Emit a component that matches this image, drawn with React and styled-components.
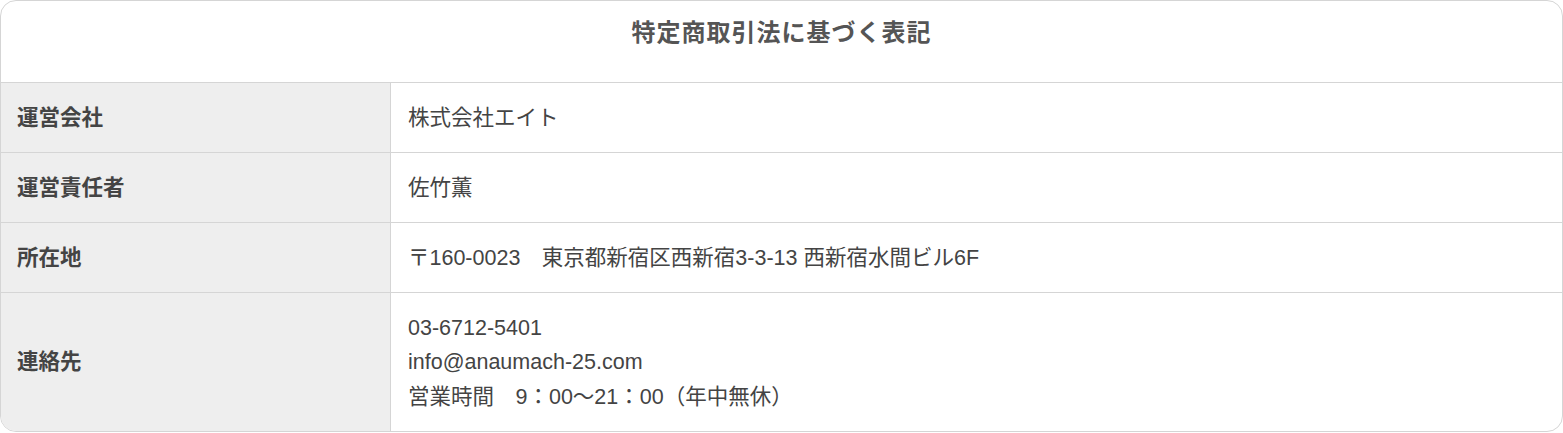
import styled, { createGlobalStyle } from 'styled-components'

const GlobalStyle = createGlobalStyle`
    html, body {
        margin: 0;
        padding: 0;
        background: #fff;
    }

    body {
        font-family: "Liberation Sans", "Noto Sans CJK JP", sans-serif;
        color: #444;
    }
`

const rows = [
    { label: '運営会社', values: ['株式会社エイト'] },
    { label: '運営責任者', values: ['佐竹薫'] },
    { label: '所在地', values: ['〒160-0023\u3000東京都新宿区西新宿3-3-13 西新宿水間ビル6F'] },
    {
        label: '連絡先',
        values: [
            '03-6712-5401',
            'info@anaumach-25.com',
            '営業時間\u30009：00〜21：00（年中無休）',
        ],
    },
]

function App () {
    return (
        <>
            <GlobalStyle />
            <Card>
                <Title>特定商取引法に基づく表記</Title>
                {rows.map((row) => (
                    <Row key={row.label}>
                        <Label>{row.label}</Label>
                        <Value>
                            {row.values.map((v) => (
                                <Line key={v}>{v}</Line>
                            ))}
                        </Value>
                    </Row>
                ))}
            </Card>
        </>
    )
}

const Card = styled.div`
    width: 100%;
    box-sizing: border-box;
    border: 1px solid #d5d5d5;
    border-radius: 16px;
    overflow: hidden;
    display: flex;
    flex-direction: column;
    background: #fff;
`

const Title = styled.h2`
    margin: 0;
    flex: none;
    height: 82px;
    box-sizing: border-box;
    padding-top: 14px;
    border-bottom: 1px solid #d5d5d5;
    text-align: center;
    font-size: 24px;
    line-height: 36px;
    font-weight: 700;
    letter-spacing: 1px;
    color: #555;
`

const Row = styled.div`
    display: grid;
    grid-template-columns: 390px 1fr;
    flex: none;
    border-bottom: 1px solid #d5d5d5;

    &:last-child {
        border-bottom: none;
    }
`

const Label = styled.div`
    display: flex;
    align-items: center;
    box-sizing: border-box;
    padding: 17.5px 16px;
    background: #eeeeee;
    border-right: 1px solid #d5d5d5;
    font-size: 21.5px;
    line-height: 34px;
    font-weight: 700;
    color: #444;
`

const Value = styled.div`
    display: flex;
    flex-direction: column;
    justify-content: center;
    padding: 17.5px 17px;
    font-size: 21.5px;
    line-height: 34px;
    color: #444;

    & > div + div {
        margin-top: 0.5px;
    }
`

const Line = styled.div`
    white-space: pre;
`

export default App
